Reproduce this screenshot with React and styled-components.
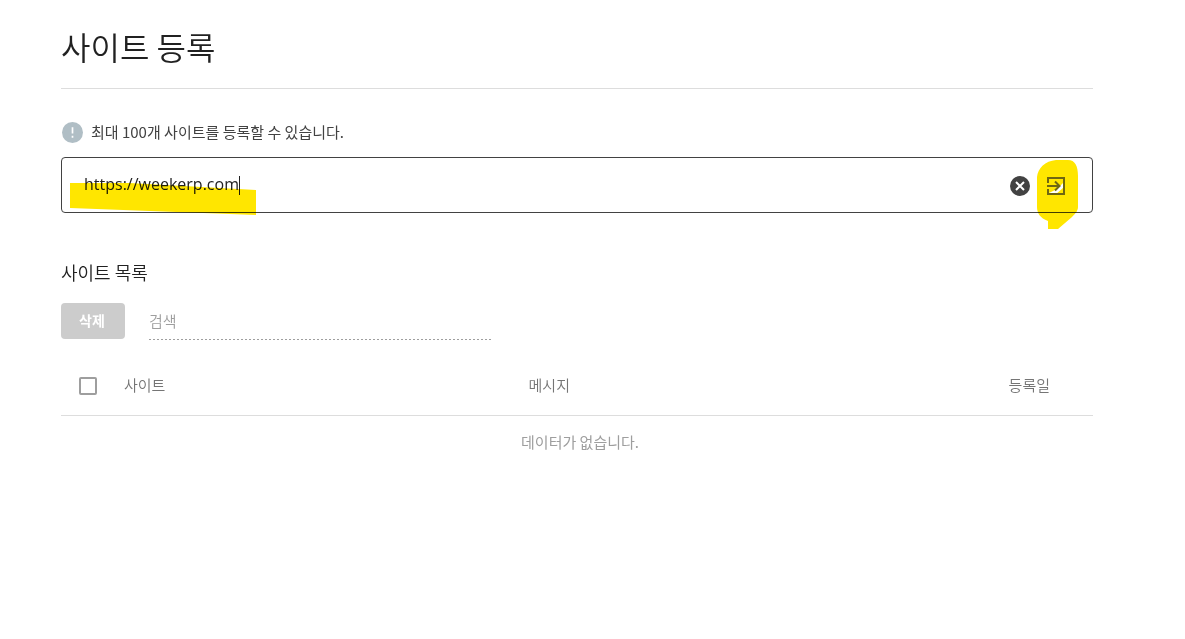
import { useState } from "react";
import styled, { createGlobalStyle } from "styled-components";

const COLOR = {
  BLACK: "#212121",
  TEXT: "#424242",
  HEAD: "#757575",
  GRAY: "#9e9e9e",
  LINE: "#dddddd",
  DISABLED: "#cccccc",
  INFO: "#b0bec5",
  MARKER: "#ffe600",
};

const GlobalStyle = createGlobalStyle`
  * {
    box-sizing: border-box;
  }

  body {
    margin: 0;
    background-color: #ffffff;
    color: ${COLOR.BLACK};
    font-family: "Noto Sans CJK KR", sans-serif;
    font-size: 15px;
    line-height: 24px;
  }

  button,
  input {
    font-family: inherit;
  }
`;

function App() {
  const [site, setSite] = useState("https://weekerp.com");
  const [keyword, setKeyword] = useState("");

  return (
    <>
      <GlobalStyle />
      <StSitePage>
        <PageTitle>사이트 등록</PageTitle>

        <Notice>
          <InfoIcon viewBox="0 0 20 20" aria-hidden="true">
            <circle cx="10" cy="10" r="10" fill={COLOR.INFO} />
            <path d="M10 5v6M10 13v2" stroke="#ffffff" strokeWidth="1.6" />
          </InfoIcon>
          최대 100개 사이트를 등록할 수 있습니다.
        </Notice>

        <SiteField>
          <TextMarker viewBox="0 0 188 34" aria-hidden="true">
            <path d="M1 1L60 1L187 8V33L1 26Z" fill={COLOR.MARKER} />
          </TextMarker>
          <SiteInput
            aria-label="사이트 주소"
            value={site}
            onChange={(e) => setSite(e.target.value)}
          />
          <Caret />
          <FieldButtons>
            <IconButton aria-label="지우기" onClick={() => setSite("")}>
              <svg viewBox="0 0 24 24" width="24" height="24">
                <circle cx="12" cy="12" r="10" fill={COLOR.TEXT} />
                <path d="M8 8l8 8M16 8l-8 8" stroke="#ffffff" strokeWidth="2" />
              </svg>
            </IconButton>
            <IconButton aria-label="등록">
              <ButtonMarker viewBox="0 0 44 72" aria-hidden="true">
                <path
                  d="M1 18C2 9 9 2 20 1H32C39 1 42 7 42 17L42 48C42 52 39 55 36 58L22 70H12V62C4 59 1 54 1 48Z"
                  fill={COLOR.MARKER}
                />
                <path d="M13 34L21 30L28 23V28L19 36Z" fill="#ffffff" />
              </ButtonMarker>
              <EnterIcon viewBox="0 0 24 24" width="24" height="24">
                <path d="M4 9V4H20V20H4V15" />
                <path d="M3 12H15M11 7.500L15.500 12L11 16.500" />
              </EnterIcon>
            </IconButton>
          </FieldButtons>
        </SiteField>

        <ListTitle>사이트 목록</ListTitle>
        <Toolbar>
          <DeleteButton disabled>삭제</DeleteButton>
          <SearchInput
            aria-label="검색"
            placeholder="검색"
            value={keyword}
            onChange={(e) => setKeyword(e.target.value)}
          />
        </Toolbar>

        <SiteTable>
          <thead>
            <tr>
              <HeadCell $width="63px">
                <CheckBox type="checkbox" aria-label="전체 선택" />
              </HeadCell>
              <HeadCell>사이트</HeadCell>
              <HeadCell $width="162px">메시지</HeadCell>
              <HeadCell $align="right" $width="39%">
                등록일
              </HeadCell>
            </tr>
          </thead>
          <tbody>
            <tr>
              <EmptyCell colSpan={4}>데이터가 없습니다.</EmptyCell>
            </tr>
          </tbody>
        </SiteTable>
      </StSitePage>
    </>
  );
}

export default App;

const StSitePage = styled.main`
  padding: 22px 92px 40px 61px;
`;

const PageTitle = styled.h1`
  margin: 0;
  padding-bottom: 18px;
  border-bottom: 1px solid ${COLOR.LINE};
  font-weight: 350;
  font-size: 32px;
  line-height: 48px;
`;

const Notice = styled.p`
  display: flex;
  align-items: center;
  gap: 8px;
  margin: 31px 0 13px;
  padding-left: 1px;
  color: ${COLOR.TEXT};
`;

const InfoIcon = styled.svg`
  width: 21px;
  height: 21px;
`;

const SiteField = styled.div`
  position: relative;
  display: flex;
  align-items: center;
  height: 56px;
  padding: 0 24px 0 22px;
  border: 1px solid ${COLOR.TEXT};
  border-radius: 4px;
`;

/* highlighter strokes lie over the field */
const TextMarker = styled.svg`
  position: absolute;
  top: 24px;
  left: 7px;
  width: 188px;
  height: 34px;
  mix-blend-mode: multiply;
  pointer-events: none;
`;

const ButtonMarker = styled.svg`
  position: absolute;
  top: -15px;
  left: -8px;
  width: 44px;
  height: 72px;
  mix-blend-mode: multiply;
  pointer-events: none;
`;

const SiteInput = styled.input`
  field-sizing: content;
  min-width: 1px;
  height: 24px;
  padding: 0 0 2px;
  border: 0;
  outline: 0;
  background: transparent;
  color: ${COLOR.BLACK};
  font-family: "Open Sans", "Noto Sans CJK KR", sans-serif;
  font-size: 16px;
  line-height: 22px;
`;

const Caret = styled.span`
  width: 1px;
  height: 19px;
  background-color: ${COLOR.BLACK};
`;

const FieldButtons = styled.div`
  display: flex;
  gap: 12px;
  margin-left: auto;
  padding-top: 2px;
`;

const IconButton = styled.button`
  position: relative;
  display: flex;
  width: 24px;
  height: 24px;
  padding: 0;
  border: 0;
  background: transparent;
  cursor: pointer;
`;

const EnterIcon = styled.svg`
  position: relative;
  fill: none;
  stroke: #6f6712;
  stroke-width: 2;
`;

const ListTitle = styled.h2`
  margin: 47px 0 19px;
  font-weight: 350;
  font-size: 18px;
  line-height: 24px;
`;

const Toolbar = styled.div`
  display: flex;
  gap: 24px;
`;

const DeleteButton = styled.button`
  width: 64px;
  height: 36px;
  padding: 0 2px 2px 0;
  border: 0;
  border-radius: 4px;
  background-color: ${COLOR.DISABLED};
  color: #ffffff;
  font-weight: 700;
  font-size: 14px;
`;

const SearchInput = styled.input`
  flex: 0 1 342px;
  min-width: 0;
  height: 37px;
  padding: 0 0 3px;
  border: 0;
  outline: 0;
  background: repeating-linear-gradient(
      to right,
      ${COLOR.GRAY} 0 2px,
      transparent 2px 4px
    )
    left bottom / 100% 1px no-repeat;
  color: ${COLOR.BLACK};
  font-weight: 350;
  font-size: 15px;

  &::placeholder {
    color: ${COLOR.GRAY};
    opacity: 1;
  }
`;

const SiteTable = styled.table`
  width: 100%;
  margin-top: 16px;
  border-collapse: collapse;
  table-layout: fixed;
`;

const HeadCell = styled.th`
  width: ${({ $width }) => $width || "auto"};
  height: 59px;
  padding: 0 43px 0 0;
  border-bottom: 1px solid ${COLOR.LINE};
  color: ${COLOR.HEAD};
  font-weight: 350;
  text-align: ${({ $align }) => $align || "left"};
`;

const CheckBox = styled.input`
  appearance: none;
  display: block;
  width: 18px;
  height: 18px;
  margin: 2px 0 0 18px;
  border: 2px solid ${COLOR.GRAY};
  border-radius: 2px;

  &:checked {
    background-color: ${COLOR.GRAY};
  }
`;

const EmptyCell = styled.td`
  height: 54px;
  padding: 0 0 0 6px;
  color: ${COLOR.GRAY};
  text-align: center;
`;
